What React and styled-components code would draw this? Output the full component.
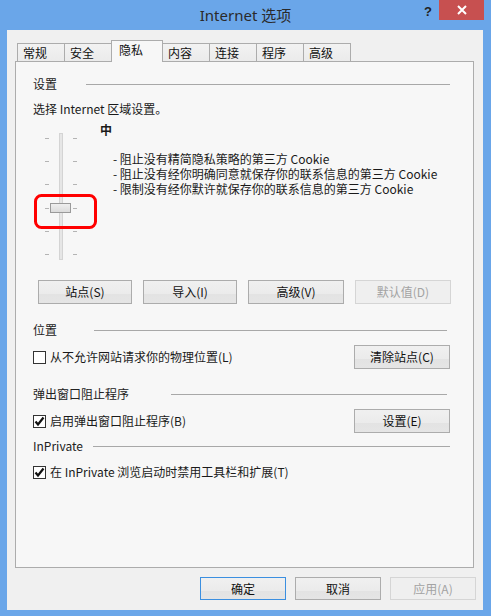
import React from "react";
import styled, { createGlobalStyle } from "styled-components";

const Global = createGlobalStyle`
  html, body { margin: 0; padding: 0; background: #6aa6e9; }
  body { font-family: "Noto Sans CJK SC", "Noto Sans", sans-serif; font-size: 12px; color: #1a1a1a; }
`;

const Window = styled.div`
  width: 491px;
  height: 616px;
  box-sizing: border-box;
  background: #6aa6e9;
  display: flex;
  flex-direction: column;
  padding: 0 8px 7px 7px;
`;

const TitleBar = styled.div`
  height: 30px;
  display: grid;
  grid-template-columns: 1fr auto 1fr;
  margin: 0 -1px 0 0;
`;

const Title = styled.div`
  grid-column: 2;
  font-size: 15px;
  line-height: 30px;
  color: #2a2a2a;
  font-family: "Noto Sans", "Noto Sans CJK SC", sans-serif;
  padding-top: 0px;
`;

const Controls = styled.div`
  grid-column: 3;
  display: flex;
  justify-content: flex-end;
  align-items: flex-start;
  gap: 7px;
`;

const Help = styled.div`
  font-family: "Liberation Sans", sans-serif;
  font-weight: bold;
  font-size: 13px;
  color: #222;
  line-height: 24px;
`;

const Close = styled.div`
  width: 45px;
  height: 20px;
  background: #c75050;
  color: #fff;
  display: flex;
  align-items: center;
  justify-content: center;
`;

const Client = styled.div`
  flex: 1;
  background: #f0f0f0;
  display: flex;
  flex-direction: column;
  padding: 10px 9px 10px 8px;
`;

const TabRow = styled.div`
  display: flex;
  align-items: flex-end;
  padding-left: 2px;
  margin-bottom: -1px;
  position: relative;
  z-index: 1;
`;

const Tab = styled.div`
  box-sizing: border-box;
  width: ${(p) => (p.$active ? 52 : 48)}px;
  height: ${(p) => (p.$active ? 22 : 19)}px;
  margin-left: ${(p) => (p.$first ? 0 : -1)}px;
  border: 1px solid #acacac;
  border-bottom: ${(p) => (p.$active ? "none" : "1px solid #acacac")};
  background: ${(p) => (p.$active ? "#f7f7f7" : "linear-gradient(#f2f2f2, #ebebeb)")};
  padding-left: ${(p) => (p.$active ? 7 : 5)}px;
  line-height: ${(p) => (p.$active ? 17 : 18)}px;
  position: relative;
  z-index: ${(p) => (p.$active ? 2 : 1)};
  color: #111;
`;

const Panel = styled.div`
  box-sizing: border-box;
  height: 507px;
  border: 1px solid #acacac;
  background: #f7f7f7;
  padding: 14px 23px 0 17px;
  display: flex;
  flex-direction: column;
`;

const GroupHeader = styled.div`
  display: flex;
  align-items: center;
  height: 16px;
  margin-top: ${(p) => p.$mt || 0}px;
  margin-right: ${(p) => p.$mr || 0}px;
  color: #222;
`;

const HeaderLabel = styled.span`
  width: ${(p) => p.$w}px;
  flex: none;
  line-height: 16px;
`;

const HeaderLine = styled.div`
  flex: 1;
  height: 1px;
  background: #a8a8a8;
`;

const Text = styled.div`
  line-height: 16px;
  margin-top: ${(p) => p.$mt || 0}px;
`;

const SliderSection = styled.div`
  display: flex;
  margin-top: 5px;
  height: 140px;
`;

const SliderArt = styled.svg`
  flex: none;
  display: block;
`;

const LevelInfo = styled.div`
  display: flex;
  flex-direction: column;
`;

const LevelName = styled.div`
  font-weight: bold;
  line-height: 16px;
`;

const LevelList = styled.div`
  margin-top: 13px;
  padding-left: 13px;
  line-height: 15px;
`;

const ButtonRow = styled.div`
  display: flex;
  gap: 11px;
  margin-top: 18px;
  margin-left: 5px;
`;

const Button = styled.div`
  box-sizing: border-box;
  width: ${(p) => p.$w || 95}px;
  height: ${(p) => p.$h || 24}px;
  border: 1px solid ${(p) => (p.$default ? "#3b8fe0" : p.$disabled ? "#d5d5d5" : "#acacac")};
  background: ${(p) => (p.$disabled ? "#efefef" : "linear-gradient(#f0f0f0 0%, #ebebeb 60%, #e3e3e3 61%, #e5e5e5 100%)")};
  color: ${(p) => (p.$disabled ? "#a3a3a3" : "#111")};
  display: flex;
  align-items: center;
  justify-content: center;
  line-height: 16px;
  flex: none;
`;

const OptionRow = styled.div`
  display: flex;
  align-items: center;
  justify-content: space-between;
  height: 24px;
  margin-top: ${(p) => p.$mt || 0}px;
`;

const CheckLabel = styled.label`
  display: flex;
  align-items: center;
  gap: 4px;
  line-height: 16px;
`;

const Box = styled.span`
  box-sizing: border-box;
  width: 13px;
  height: 13px;
  border: 1px solid #333;
  background: #fff;
  display: flex;
  align-items: center;
  justify-content: center;
`;

const Footer = styled.div`
  display: flex;
  justify-content: flex-end;
  gap: 9px;
  margin-top: 9px;
  margin-right: -2px;
`;

function Check({ checked }) {
  return (
    <Box>
      {checked && (
        <svg width="11" height="11" viewBox="0 0 11 11">
          <path d="M1.5 5.5 L4 8.5 L9.5 1.5" fill="none" stroke="#111" strokeWidth="2.2" />
        </svg>
      )}
    </Box>
  );
}

function Header({ label, w, mt, mr }) {
  return (
    <GroupHeader $mt={mt} $mr={mr}>
      <HeaderLabel $w={w}>{label}</HeaderLabel>
      <HeaderLine />
    </GroupHeader>
  );
}

const tickYs = [16, 39, 62, 86, 109, 132];

function Slider() {
  return (
    <SliderArt width="67" height="140" viewBox="0 0 67 140">
      <rect x="26.5" y="11.5" width="3" height="126" fill="#e6e6e6" stroke="#d4d4d4" />
      {tickYs.map((y) => (
        <g key={y}>
          <rect x="12" y={y} width="4" height="1" fill="#b4b4b4" />
          <rect x="40" y={y} width="4" height="1" fill="#b4b4b4" />
        </g>
      ))}
      <defs>
        <linearGradient id="thumb" x1="0" y1="0" x2="0" y2="1">
          <stop offset="0" stopColor="#f0f0f0" />
          <stop offset="1" stopColor="#dadada" />
        </linearGradient>
      </defs>
      <rect x="17.5" y="81.5" width="20" height="9" fill="url(#thumb)" stroke="#9a9a9a" />
      <rect x="2.5" y="73.5" width="60" height="32" rx="6" ry="6" fill="none" stroke="#ff0000" strokeWidth="3" />
    </SliderArt>
  );
}

export default function App() {
  const tabs = ["常规", "安全", "隐私", "内容", "连接", "程序", "高级"];
  return (
    <>
      <Global />
      <Window>
        <TitleBar>
          <Title>Internet 选项</Title>
          <Controls>
            <Help>?</Help>
            <Close>
              <svg width="10" height="10" viewBox="0 0 10 10">
                <path d="M1 1 L9 9 M9 1 L1 9" stroke="#fff" strokeWidth="2" />
              </svg>
            </Close>
          </Controls>
        </TitleBar>
        <Client>
          <TabRow>
            {tabs.map((t, i) => (
              <Tab key={t} $first={i === 0} $active={t === "隐私"}>
                {t}
              </Tab>
            ))}
          </TabRow>
          <Panel>
            <Header label="设置" w={53} mr={0} />
            <Text $mt={9}>选择 Internet 区域设置。</Text>
            <SliderSection>
              <Slider />
              <LevelInfo>
                <LevelName>中</LevelName>
                <LevelList>
                  <div>- 阻止没有精简隐私策略的第三方 Cookie</div>
                  <div>- 阻止没有经你明确同意就保存你的联系信息的第三方 Cookie</div>
                  <div>- 限制没有经你默许就保存你的联系信息的第三方 Cookie</div>
                </LevelList>
              </LevelInfo>
            </SliderSection>
            <ButtonRow>
              <Button $w={94}>站点(S)</Button>
              <Button $w={94}>导入(I)</Button>
              <Button $w={96}>高级(V)</Button>
              <Button $w={96} $disabled>默认值(D)</Button>
            </ButtonRow>
            <Header label="位置" w={61} mt={18} mr={3} />
            <OptionRow $mt={7}>
              <CheckLabel>
                <Check />
                从不允许网站请求你的物理位置(L)
              </CheckLabel>
              <Button $w={96}>清除站点(C)</Button>
            </OptionRow>
            <Header label="弹出窗口阻止程序" w={138} mt={17} mr={3} />
            <OptionRow $mt={7}>
              <CheckLabel>
                <Check checked />
                启用弹出窗口阻止程序(B)
              </CheckLabel>
              <Button $w={96}>设置(E)</Button>
            </OptionRow>
            <Header label="InPrivate" w={60} mt={5} />
            <OptionRow $mt={6}>
              <CheckLabel>
                <Check checked />
                在 InPrivate 浏览启动时禁用工具栏和扩展(T)
              </CheckLabel>
            </OptionRow>
          </Panel>
          <Footer>
            <Button $w={86} $h={23} $default>确定</Button>
            <Button $w={86} $h={23}>取消</Button>
            <Button $w={86} $h={23} $disabled>应用(A)</Button>
          </Footer>
        </Client>
      </Window>
    </>
  );
}
